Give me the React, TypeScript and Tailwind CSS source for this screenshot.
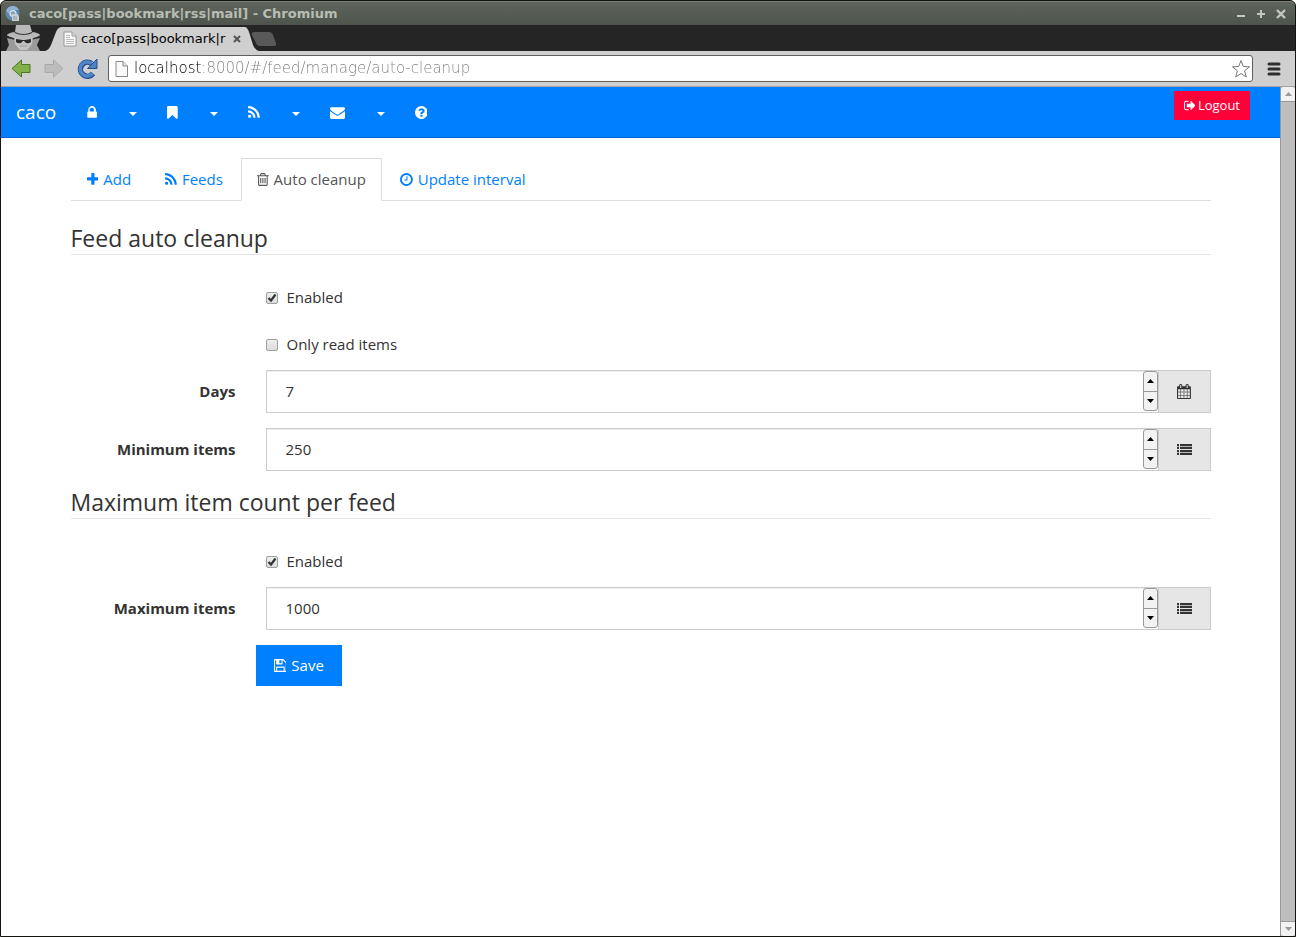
import { useState } from "react";
import type { ReactNode } from "react";

// x offset and width of each glyph on a 1792 unit em square
const ICONS = {
  lock: {
    x: 320,
    w: 1184,
    d: "M640 768h512v-192q0-106-75-181t-181-75-181 75-75 181v192zm864 96v576q0 40-28 68t-68 28h-960q-40 0-68-28t-28-68v-576q0-40 28-68t68-28h32v-192q0-184 132-316t316-132 316 132 132 316v192h32q40 0 68 28t28 68z"
  },
  bookmark: {
    x: 256,
    w: 1280,
    d: "M1420 128q23 0 44 9 33 13 52.500 41t19.500 62v1289q0 34-19.500 62t-52.500 41q-19 8-44 8-48 0-83-32l-441-424-441 424q-36 33-83 33-23 0-44-9-33-13-52.500-41t-19.500-62v-1289q0-34 19.500-62t52.500-41q21-9 44-9h1048z"
  },
  rss: {
    x: 192,
    w: 1408,
    d: "M576 1344q0 80-56 136t-136 56-136-56-56-136 56-136 136-56 136 56 56 136zm512 123q2 28-17 48-18 21-47 21h-135q-25 0-43-16.500t-20-41.500q-22-229-184.500-391.500t-391.500-184.500q-25-2-41.500-20t-16.500-43v-135q0-29 21-47 17-17 43-17h5q160 13 306 80.500t259 181.500q114 113 181.500 259t80.500 306zm512 2q2 27-18 47-18 20-46 20h-143q-26 0-44.500-17.500t-19.500-42.500q-12-215-101-408.500t-231.500-336-336-231.500-408.500-102q-25-1-42.500-19.500t-17.500-43.500v-143q0-28 20-46 18-18 44-18h3q262 13 501.500 120t425.500 294q187 186 294 425.500t120 501.500z"
  },
  envelope: {
    x: 0,
    w: 1792,
    d: "M1792 710v794q0 66-47 113t-113 47h-1472q-66 0-113-47t-47-113v-794q44 49 101 87 362 246 497 345 57 42 92.500 65.500t94.500 48 110 24.500h2q51 0 110-24.500t94.500-48 92.500-65.500q170-123 498-345 57-39 100-87zm0-294q0 79-49 151t-122 123q-376 261-468 325-10 7-42.500 31t-54 38.500-52 32.500-57.500 27-50 9h-2q-23 0-50-9t-57.500-27-52-32.500-54-38.500-42.500-31q-91-64-262-182.500t-205-142.500q-62-42-117-115.500t-55-136.500q0-78 41.500-130t118.500-52h1472q65 0 112.500 47t47.500 113z"
  },
  question: {
    x: 128,
    w: 1536,
    d: "M1024 1376v-192q0-14-9-23t-23-9h-192q-14 0-23 9t-9 23v192q0 14 9 23t23 9h192q14 0 23-9t9-23zm256-672q0-88-55.500-163t-138.500-116-170-41q-243 0-371 213-15 24 8 42l132 100q7 6 19 6 16 0 25-12 53-68 86-92 34-24 86-24 48 0 85.500 26t37.500 59q0 38-20 61t-68 45q-63 28-115.500 86.500t-52.500 125.500v36q0 14 9 23t23 9h192q14 0 23-9t9-23q0-19 21.500-49.500t54.500-49.500q32-18 49-28.500t46-35 44.500-48 28-60.500 12.500-81zm384 192q0 209-103 385.500t-279.500 279.500-385.500 103-385.500-103-279.500-279.500-103-385.500 103-385.500 279.500-279.500 385.500-103 385.500 103 279.500 279.500 103 385.500z"
  },
  signOut: {
    x: 64,
    w: 1568,
    d: "M704 1440q0 4 1 20t.5 26.500-3 23.500-10 19.500-20.500 6.500h-320q-119 0-203.500-84.500t-84.500-203.500v-704q0-119 84.500-203.500t203.500-84.500h320q13 0 22.500 9.500t9.500 22.500q0 4 1 20t.5 26.500-3 23.500-10 19.500-20.500 6.500h-320q-66 0-113 47t-47 113v704q0 66 47 113t113 47h312l11.500 1 11.500 3 8 5.500 7 9 2 13.500zm928-544q0 26-19 45l-544 544q-19 19-45 19t-45-19-19-45v-288h-448q-26 0-45-19t-19-45v-384q0-26 19-45t45-19h448v-288q0-26 19-45t45-19 45 19l544 544q19 19 19 45z"
  },
  plus: {
    x: 192,
    w: 1408,
    d: "M1600 736v192q0 40-28 68t-68 28h-416v416q0 40-28 68t-68 28h-192q-40 0-68-28t-28-68v-416h-416q-40 0-68-28t-28-68v-192q0-40 28-68t68-28h416v-416q0-40 28-68t68-28h192q40 0 68 28t28 68v416h416q40 0 68 28t28 68z"
  },
  trash: {
    x: 192,
    w: 1408,
    d: "M704 736v576q0 14-9 23t-23 9h-64q-14 0-23-9t-9-23v-576q0-14 9-23t23-9h64q14 0 23 9t9 23zm256 0v576q0 14-9 23t-23 9h-64q-14 0-23-9t-9-23v-576q0-14 9-23t23-9h64q14 0 23 9t9 23zm256 0v576q0 14-9 23t-23 9h-64q-14 0-23-9t-9-23v-576q0-14 9-23t23-9h64q14 0 23 9t9 23zm128 724v-948h-896v948q0 22 7 40.500t14.500 27 10.500 8.500h832q3 0 10.500-8.500t14.500-27 7-40.500zm-672-1076h448l-48-117q-7-9-17-11h-317q-10 2-17 11zm928 32v64q0 14-9 23t-23 9h-96v948q0 83-47 143.500t-113 60.500h-832q-66 0-113-58.500t-47-141.500v-952h-96q-14 0-23-9t-9-23v-64q0-14 9-23t23-9h309l70-167q15-37 54-63t79-26h320q40 0 79 26t54 63l70 167h309q14 0 23 9t9 23z"
  },
  clock: {
    x: 128,
    w: 1536,
    d: "M1024 544v448q0 14-9 23t-23 9h-320q-14 0-23-9t-9-23v-64q0-14 9-23t23-9h224v-352q0-14 9-23t23-9h64q14 0 23 9t9 23zm416 352q0-148-73-273t-198-198-273-73-273 73-198 198-73 273 73 273 198 198 273 73 273-73 198-198 73-273zm224 0q0 209-103 385.500t-279.500 279.500-385.500 103-385.500-103-279.500-279.500-103-385.500 103-385.500 279.500-279.500 385.500-103 385.500 103 279.500 279.500 103 385.500z"
  },
  calendar: {
    x: 64,
    w: 1664,
    d: "M192 1664h288v-288h-288v288zm352 0h320v-288h-320v288zm-352-352h288v-320h-288v320zm352 0h320v-320h-320v320zm-352-384h288v-288h-288v288zm736 736h320v-288h-320v288zm-384-736h320v-288h-320v288zm768 736h288v-288h-288v288zm-384-352h320v-320h-320v320zm-352-864v-288q0-13-9.500-22.500t-22.500-9.500h-64q-13 0-22.500 9.500t-9.500 22.500v288q0 13 9.500 22.500t22.500 9.500h64q13 0 22.500-9.500t9.500-22.500zm736 864h288v-320h-288v320zm-384-384h320v-288h-320v288zm384 0h288v-288h-288v288zm32-480v-288q0-13-9.500-22.500t-22.500-9.500h-64q-13 0-22.500 9.500t-9.500 22.500v288q0 13 9.500 22.500t22.500 9.500h64q13 0 22.500-9.500t9.500-22.500zm384-64v1280q0 52-38 90t-90 38h-1408q-52 0-90-38t-38-90v-1280q0-52 38-90t90-38h128v-96q0-66 47-113t113-47h64q66 0 113 47t47 113v96h384v-96q0-66 47-113t113-47h64q66 0 113 47t47 113v96h128q52 0 90 38t38 90z"
  },
  list: {
    x: 0,
    w: 1792,
    d: "M0 224h240v240H0zM358 224h1434v240H358zM0 582h240v240H0zM358 582h1434v240H358zM0 941h240v240H0zM358 941h1434v240H358zM0 1299h240v240H0zM358 1299h1434v240H358z"
  },
  save: {
    x: 128,
    w: 1536,
    d: "M512 1536h768v-384h-768v384zm896 0h128v-896q0-14-10-38.500t-20-34.500l-281-281q-10-10-34-20t-39-10v416q0 40-28 68t-68 28h-576q-40 0-68-28t-28-68v-416h-128v1280h128v-416q0-40 28-68t68-28h832q40 0 68 28t28 68v416zm-384-928v-320q0-13-9.500-22.500t-22.500-9.500h-192q-13 0-22.500 9.500t-9.500 22.500v320q0 13 9.500 22.500t22.500 9.500h192q13 0 22.500-9.500t9.500-22.500zm640 32v928q0 40-28 68t-68 28h-1344q-40 0-68-28t-28-68v-1344q0-40 28-68t68-28h928q40 0 88 20t76 48l280 280q28 28 48 76t20 88z"
  }
};

type IconName = keyof typeof ICONS;

function Icon({ name, className = "h-[15px]" }: { name: IconName; className?: string }) {
  const icon = ICONS[name];
  return (
    <svg viewBox={`${icon.x} 0 ${icon.w} 1792`} className={`w-auto shrink-0 ${className}`} fill="currentColor" aria-hidden="true">
      <path d={icon.d} />
    </svg>
  );
}

const NAV: { name: IconName; label: string; menu: boolean }[] = [
  { name: "lock", label: "Passwords", menu: true },
  { name: "bookmark", label: "Bookmarks", menu: true },
  { name: "rss", label: "Feeds", menu: true },
  { name: "envelope", label: "Mail", menu: true },
  { name: "question", label: "Help", menu: false }
];

const TABS: { icon: IconName; label: string; href: string; active?: boolean }[] = [
  { icon: "plus", label: "Add", href: "#/feed/manage/add" },
  { icon: "rss", label: "Feeds", href: "#/feed/manage/feeds" },
  { icon: "trash", label: "Auto cleanup", href: "#/feed/manage/auto-cleanup", active: true },
  { icon: "clock", label: "Update interval", href: "#/feed/manage/update-interval" }
];

function TitleBar() {
  return (
    <div className="flex h-6 items-center bg-linear-to-b from-[#5f655c] to-[#4d544b] pl-1 pr-[6px] border-t border-[#7c8179] rounded-t-[5px]">
      <svg viewBox="0 0 16 16" className="size-4" aria-hidden="true">
        <circle cx="7.500" cy="7.500" r="7" fill="#5b87ad" />
        <path d="M1 5a7 7 0 0 1 13-1L8 4a4 4 0 0 0-4 4z" fill="#8fb2d0" />
        <circle cx="8" cy="7.500" r="3.600" fill="#dce8f2" />
        <circle cx="8" cy="7.500" r="2.300" fill="#7ba0c0" />
        <path d="M7 8h5l2 2v5H7z" fill="#c9d0d4" />
        <path d="M8 11h4M8 13h4" stroke="#8d979d" />
      </svg>
      <h1 className="ml-2 flex-1 font-['DejaVu_Sans',sans-serif] text-[13px] font-bold text-[#b8bdb4]">
        caco[pass|bookmark|rss|mail] - Chromium
      </h1>
      <div className="flex gap-1 text-[#c3c8bf]">
        <button aria-label="Minimize" className="size-4">
          <svg viewBox="0 0 16 16" stroke="currentColor" strokeWidth="2"><path d="M4 10h8" /></svg>
        </button>
        <button aria-label="Maximize" className="size-4">
          <svg viewBox="0 0 16 16" stroke="currentColor" strokeWidth="2"><path d="M4 8h8M8 4v8" /></svg>
        </button>
        <button aria-label="Close" className="size-4">
          <svg viewBox="0 0 16 16" stroke="currentColor" strokeWidth="2.400"><path d="M4 4l8 8M12 4l-8 8" /></svg>
        </button>
      </div>
    </div>
  );
}

function TabStrip() {
  return (
    <div className="flex h-[26px] items-end bg-[#252525] pl-[5px]">
      <svg viewBox="0 0 35 26" className="h-[26px] w-[35px]" aria-hidden="true">
        <path d="M0 26l3-6-2-7 9 2h14l10-2-3 7 3 6z" fill="#9b9b9b" />
        <path d="M8 11h19l-1 8-5 6h-7l-5-6z" fill="#c4c4c4" />
        <path d="M10 0h14l2 7q8 1 8 3.500Q28 14 17.500 14T1 10.500Q1 8 9 7z" fill="#b9b9b9" />
        <path d="M9 7q8 4 17 0l.5 1q-9 4-18 0z" fill="#333" />
        <path d="M10 14l7 1h1l7-1v3q-2 2-5 1l-2-2h-1l-2 2q-3 1-5-1z" fill="#2b2b2b" />
        <path d="M14 21h7" stroke="#999" />
      </svg>
      <div className="ml-1 flex h-6 items-stretch">
        <svg viewBox="0 0 18 24" className="h-6 w-[18px]" aria-hidden="true">
          <path d="M0 24q4-1 6-6l5-13q2-5 6-5h1v24z" fill="#cfcfcf" />
        </svg>
        <div className="flex w-[182px] items-center bg-[#cfcfcf]">
          <svg viewBox="0 0 14 16" className="h-4 w-[14px]" aria-hidden="true">
            <path d="M1 1h8l4 4v10H1z" fill="#f8f8f8" stroke="#999" />
            <path d="M9 1v4h4" fill="#ddd" stroke="#999" />
            <path d="M3 4.500h4M3 6.500h4M3 8.500h8M3 10.500h8M3 12.500h8" stroke="#bbb" />
          </svg>
          <span className="ml-1 flex-1 overflow-hidden whitespace-nowrap font-['DejaVu_Sans',sans-serif] text-[13px] text-black">
            caco[pass|bookmark|r
          </span>
          <button aria-label="Close tab" className="size-4 text-[#555]">
            <svg viewBox="0 0 16 16" stroke="currentColor" strokeWidth="2"><path d="M5 5l6 6M11 5l-6 6" /></svg>
          </button>
        </div>
        <svg viewBox="0 0 14 24" className="h-6 w-[14px]" aria-hidden="true">
          <path d="M14 24q-4-1-6-6L4 5Q2 0 0 0v24z" fill="#cfcfcf" />
        </svg>
        <button aria-label="New tab" className="-ml-2 h-6 w-[26px]">
          <svg viewBox="0 0 26 24"><path d="M3 5h15q3 0 4 3l3 8q1 3-2 3H9q-3 0-4-3L1 8q-1-3 2-3z" fill="#595959" /></svg>
        </button>
      </div>
    </div>
  );
}

function Toolbar() {
  return (
    <div className="flex h-9 items-center border-b border-[#a3a3a3] bg-[#cfcfcf] pl-[9px] pr-[13px]">
      <button aria-label="Back" className="h-6 w-6">
        <svg viewBox="0 0 24 24">
          <path d="M2 11.500l9.500-8.500v4.500h8.500v8h-8.500V20z" fill="#84b04b" stroke="#4d7a24" />
        </svg>
      </button>
      <button aria-label="Forward" className="ml-[7px] h-6 w-6">
        <svg viewBox="0 0 24 24">
          <path d="M22 11.500L12.500 3v4.500H4v8h8.500V20z" fill="#bdbdbd" stroke="#aaa" />
        </svg>
      </button>
      <button aria-label="Reload" className="ml-[10px] h-6 w-6">
        <svg viewBox="0 0 24 24">
          <path d="M18 16.500A7 7 0 1 1 16.500 6.500" fill="none" stroke="#234f8c" strokeWidth="5.500" />
          <path d="M12.500 11.500h9.500V2z" fill="#4d83c4" stroke="#234f8c" />
          <path d="M17.500 16.500A7 7 0 1 1 16.500 6.500" fill="none" stroke="#4f86c8" strokeWidth="3.500" />
        </svg>
      </button>
      <div className="ml-[9px] flex h-[27px] flex-1 items-center rounded-[3px] border border-[#5f5f5f] bg-white pl-[6px] pr-px">
        <svg viewBox="0 0 13 16" className="h-4 w-[13px]" aria-hidden="true">
          <path d="M1 .5h7l4.500 4.500v10.500H1z" fill="#fafafa" stroke="#888" />
          <path d="M8 .5V5h4.500" fill="#e5e5e5" stroke="#888" />
        </svg>
        <input
          type="text"
          aria-label="Address"
          defaultValue="localhost:8000/#/feed/manage/auto-cleanup"
          className="ml-[6px] min-w-0 flex-1 bg-[linear-gradient(to_right,#000_69px,#808080_69px)] bg-clip-text font-['DejaVu_Sans_Light','DejaVu_Sans',sans-serif] text-[15px] font-extralight text-transparent caret-black outline-none"
        />
        <button aria-label="Bookmark this page" className="size-5">
          <svg viewBox="0 0 20 20" fill="#fff" stroke="#777">
            <path d="M10 1.500l2.300 6 6.200.3-4.900 4 1.700 6.200-5.300-3.500L4.700 18l1.700-6.200-4.900-4 6.200-.3z" />
          </svg>
        </button>
      </div>
      <button aria-label="Menu" className="ml-[13px] h-4 w-4">
        <svg viewBox="0 0 16 16" stroke="#2e2e2e" strokeWidth="3" strokeLinecap="round">
          <path d="M3 3h10M3 8h10M3 13h10" />
        </svg>
      </button>
    </div>
  );
}

function Navbar() {
  return (
    <nav className="flex h-[51px] items-start border-b border-[#0066cc] bg-[#007fff] pr-[30px] text-white">
      <a href="#/" className="flex h-[50px] items-center pl-[15px] pr-4 text-[19px] leading-5">caco</a>
      <ul className="flex flex-1">
        {NAV.map((item) => (
          <li key={item.name} className="flex h-[50px]">
            <a href="#/" aria-label={item.label} className="flex items-center px-[15px]">
              <Icon name={item.name} />
            </a>
            {item.menu && (
              <button aria-label={`${item.label} menu`} className="flex items-center pl-[17px] pr-[15px] pt-1">
                <svg viewBox="0 0 8 4" className="h-1 w-2" fill="currentColor"><path d="M0 0h8L4 4z" /></svg>
              </button>
            )}
          </li>
        ))}
      </ul>
      <button className="mt-1 flex h-[29px] items-center gap-[3px] bg-[#ff0039] px-[10px] text-[13px]">
        <Icon name="signOut" className="h-[13px]" />
        Logout
      </button>
    </nav>
  );
}

function Legend({ children }: { children: ReactNode }) {
  return <legend className="mb-[21px] block h-[33px] w-full border-b border-[#e5e5e5] text-[23px] leading-8 text-[#333]">{children}</legend>;
}

function CheckRow({ id, label, initial }: { id: string; label: string; initial: boolean }) {
  const [checked, setChecked] = useState(initial);
  return (
    <div className="mb-[15px] flex h-8 items-center pl-[195px] pt-[11px]">
      <span className="relative flex size-3">
        <input
          id={id}
          type="checkbox"
          checked={checked}
          onChange={(e) => setChecked(e.target.checked)}
          className="size-3 appearance-none rounded-[2px] border border-[#a0a0a0] bg-linear-to-b from-[#eee] to-[#dcdcdc]"
        />
        {checked && (
          <svg viewBox="0 0 12 12" className="pointer-events-none absolute inset-0 size-3" fill="none" stroke="#333" strokeWidth="2.200">
            <path d="M2.500 6l2.500 2.500L9.500 2.500" />
          </svg>
        )}
      </span>
      <label htmlFor={id} className="pl-[9px] leading-[21px]">{label}</label>
    </div>
  );
}

function NumberRow({ id, label, initial, icon }: { id: string; label: string; initial: number; icon: IconName }) {
  const [value, setValue] = useState(initial);
  return (
    <div className="mb-[15px] flex h-[43px]">
      <label htmlFor={id} className="mr-[30px] w-[165px] shrink-0 pt-[11px] text-right font-bold leading-[21px]">{label}</label>
      <div className="flex flex-1 border border-[#ccc] bg-white shadow-[inset_0_1px_1px_rgba(0,0,0,0.075)]">
        <input
          id={id}
          type="number"
          value={value}
          onChange={(e) => setValue(Number(e.target.value))}
          className="min-w-0 flex-1 appearance-none pl-[19px] outline-none [&::-webkit-inner-spin-button]:appearance-none"
        />
        <div className="mb-px flex w-[15px] flex-col overflow-hidden rounded-[3px] border border-[#999] bg-[#f2f2f2] text-black">
          <button type="button" aria-label={`Increase ${label}`} onClick={() => setValue(value + 1)} className="flex flex-1 items-center justify-center border-b border-[#999]">
            <svg viewBox="0 0 7 4" className="h-1 w-[7px]"><path d="M0 4h7L3.500 0z" /></svg>
          </button>
          <button type="button" aria-label={`Decrease ${label}`} onClick={() => setValue(value - 1)} className="flex flex-1 items-center justify-center">
            <svg viewBox="0 0 7 4" className="h-1 w-[7px]"><path d="M0 0h7L3.500 4z" /></svg>
          </button>
        </div>
        <span className="flex w-[52px] items-center justify-center border-l border-[#ccc] bg-[#e6e6e6]">
          <Icon name={icon} />
        </span>
      </div>
    </div>
  );
}

function Scrollbar() {
  return (
    <div className="flex w-[15px] shrink-0 flex-col border-l border-[#999] bg-[#bebebe]">
      <button aria-label="Scroll up" className="flex h-[15px] items-center justify-center rounded-t-[3px] border-b border-[#999] bg-[#f2f2f2]">
        <svg viewBox="0 0 7 4" className="h-1 w-[7px]" fill="#999"><path d="M0 4h7L3.500 0z" /></svg>
      </button>
      <div className="flex-1" />
      <button aria-label="Scroll down" className="flex h-[15px] items-center justify-center rounded-b-[3px] border-t border-[#999] bg-[#f2f2f2]">
        <svg viewBox="0 0 7 4" className="h-1 w-[7px]" fill="#999"><path d="M0 0h7L3.500 4z" /></svg>
      </button>
    </div>
  );
}

function App() {
  return (
    <div className="flex min-h-screen flex-col rounded-t-[6px] border border-[#14140f] bg-[#14140f]">
      <TitleBar />
      <TabStrip />
      <Toolbar />
      <div className="flex flex-1 bg-white font-['Open_Sans',sans-serif] text-[15px] text-[#333]">
        <div className="min-w-0 flex-1">
          <Navbar />
          <main className="mx-auto w-full max-w-[1140px] pt-5">
            <ul className="mb-[21px] flex border-b border-[#ddd]">
              {TABS.map((tab) => (
                <li key={tab.label} className="-mb-px mr-[2px]">
                  <a
                    href={tab.href}
                    className={`flex items-center gap-[5px] border px-[15px] py-[10px] leading-[21px] ${
                      tab.active ? "border-[#ddd] border-b-white bg-white text-[#555]" : "border-transparent text-[#007fff]"
                    }`}
                  >
                    <Icon name={tab.icon} />
                    {tab.label}
                  </a>
                </li>
              ))}
            </ul>
            <form onSubmit={(e) => e.preventDefault()}>
              <fieldset>
                <Legend>Feed auto cleanup</Legend>
                <CheckRow id="cleanup-enabled" label="Enabled" initial={true} />
                <CheckRow id="only-read" label="Only read items" initial={false} />
                <NumberRow id="days" label="Days" initial={7} icon="calendar" />
                <NumberRow id="min-items" label="Minimum items" initial={250} icon="list" />
              </fieldset>
              <fieldset>
                <Legend>Maximum item count per feed</Legend>
                <CheckRow id="max-enabled" label="Enabled" initial={true} />
                <NumberRow id="max-items" label="Maximum items" initial={1000} icon="list" />
              </fieldset>
              <button type="submit" className="ml-[185px] flex h-[41px] items-center gap-[5px] bg-[#007fff] px-[18px] text-white">
                <Icon name="save" />
                Save
              </button>
            </form>
          </main>
        </div>
        <Scrollbar />
      </div>
    </div>
  );
}

export default App;
